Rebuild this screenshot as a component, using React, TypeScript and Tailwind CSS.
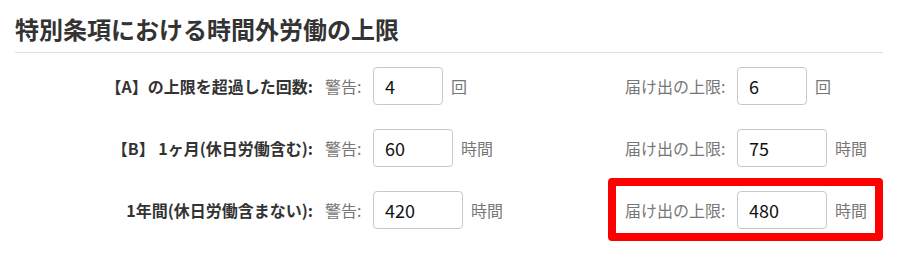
import React from 'react';

interface LimitRow {
    label: string;
    warn: string;
    warnWidth: string;
    notify: string;
    notifyWidth: string;
    unit: string;
    highlight?: boolean;
}

const rows: LimitRow[] = [
    { label: '【A】の上限を超過した回数:', warn: '4', warnWidth: 'w-[70px]', notify: '6', notifyWidth: 'w-[70px]', unit: '回' },
    { label: '【B】 1ヶ月(休日労働含む):', warn: '60', warnWidth: 'w-[80px]', notify: '75', notifyWidth: 'w-[90px]', unit: '時間' },
    { label: '1年間(休日労働含まない):', warn: '420', warnWidth: 'w-[90px]', notify: '480', notifyWidth: 'w-[90px]', unit: '時間', highlight: true },
];

const NumberBox: React.FC<{ value: string; width: string }> = ({ value, width }) => (
    <input
        type="text"
        defaultValue={value}
        className={`${width} h-[38px] rounded-[4px] border border-[#c8c8c8] bg-white px-[11px] text-[18px] text-[#111] outline-none`}
    />
);

const App: React.FC = () => {
    return (
        <div className="min-h-screen bg-white px-[15px] font-['Noto_Sans_CJK_JP','Noto_Sans',sans-serif]">
            <h2 className="pt-[13px] pb-[7px] text-[24px] font-bold leading-[32px] text-[#333] border-b border-[#e0e0e0]">
                特別条項における時間外労働の上限
            </h2>
            <div className="mt-[14px] grid grid-cols-[298px_288px_auto] items-center gap-x-3 gap-y-[24px]">
                {rows.map((row) => (
                    <React.Fragment key={row.label}>
                        <div className="text-right text-[16px] font-bold text-[#333]">{row.label}</div>
                        <div className="flex items-center text-[16px] text-[#777]">
                            <span className="w-[42px] mr-[6px]">警告:</span>
                            <NumberBox value={row.warn} width={row.warnWidth} />
                            <span className="ml-[8px]">{row.unit}</span>
                        </div>
                        <div className="relative flex w-fit items-center text-[16px] text-[#777]">
                            <span className="w-[105px] mr-[7px]">届け出の上限:</span>
                            <NumberBox value={row.notify} width={row.notifyWidth} />
                            <span className="ml-[8px]">{row.unit}</span>
                            {row.highlight && (
                                <div className="pointer-events-none absolute -left-[17px] -right-[16px] -top-[13px] -bottom-[12px] rounded-[4px] border-[8px] border-[#ff0000]" />
                            )}
                        </div>
                    </React.Fragment>
                ))}
            </div>
        </div>
    );
};

export default App;
